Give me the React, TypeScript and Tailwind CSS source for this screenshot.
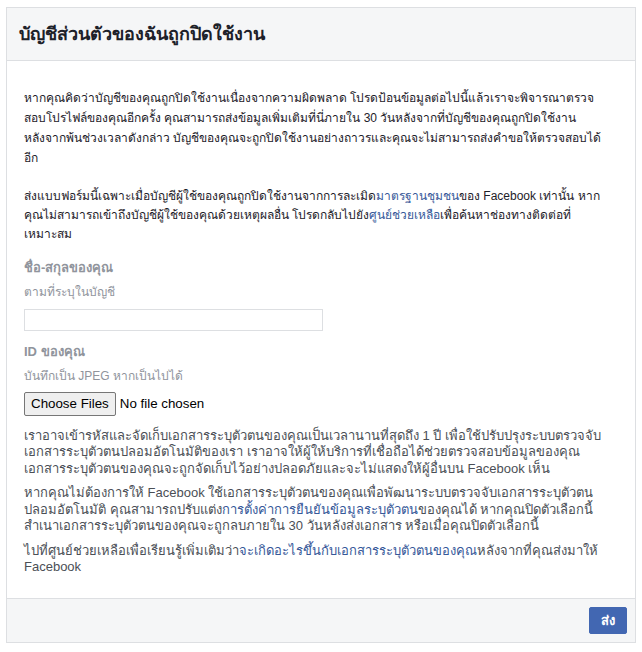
import React from 'react';

const link = 'text-[#365899]';

function Lines({ lines, className }: { lines: React.ReactNode[]; className: string }) {
  return (
    <p className={className}>
      {lines.map((l, i) => (
        <span key={i} className="block whitespace-nowrap">
          {l}
        </span>
      ))}
    </p>
  );
}

export default function App() {
  return (
    <div className="min-h-screen bg-white px-[6px] pt-[7px] font-['Liberation_Sans',Arial,sans-serif]">
      <div className="border border-[#dddfe2] bg-white">
        {/* Header */}
        <div className="flex h-[53px] items-center border-b border-[#dddfe2] bg-[#f5f6f7] px-[12px]">
          <h2 className="text-[18px] font-bold text-[#1d2129]">บัญชีส่วนตัวของฉันถูกปิดใช้งาน</h2>
        </div>

        {/* Body */}
        <div className="px-[17px] pt-[27px] pb-[22px]">
          <Lines
            className="text-[12px] leading-[20px] text-[#1d2129]"
            lines={[
              'หากคุณคิดว่าบัญชีของคุณถูกปิดใช้งานเนื่องจากความผิดพลาด โปรดป้อนข้อมูลต่อไปนี้แล้วเราจะพิจารณาตรวจ',
              'สอบโปรไฟล์ของคุณอีกครั้ง คุณสามารถส่งข้อมูลเพิ่มเติมที่นี่ภายใน 30 วันหลังจากที่บัญชีของคุณถูกปิดใช้งาน',
              'หลังจากพ้นช่วงเวลาดังกล่าว บัญชีของคุณจะถูกปิดใช้งานอย่างถาวรและคุณจะไม่สามารถส่งคำขอให้ตรวจสอบได้',
              'อีก',
            ]}
          />
          <Lines
            className="mt-[19px] text-[12px] leading-[19px] text-[#1d2129]"
            lines={[
              <>
                ส่งแบบฟอร์มนี้เฉพาะเมื่อบัญชีผู้ใช้ของคุณถูกปิดใช้งานจากการละเมิด<span className={link}>มาตรฐานชุมชน</span>ของ Facebook เท่านั้น หาก
              </>,
              <>
                คุณไม่สามารถเข้าถึงบัญชีผู้ใช้ของคุณด้วยเหตุผลอื่น โปรดกลับไปยัง<span className={link}>ศูนย์ช่วยเหลือ</span>เพื่อค้นหาช่องทางติดต่อที่
              </>,
              'เหมาะสม',
            ]}
          />

          <div className="mt-[14px] text-[13px] font-bold leading-[20px] text-[#90949c]">ชื่อ-สกุลของคุณ</div>
          <div className="mt-[4px] text-[12px] leading-[20px] text-[#90949c]">ตามที่ระบุในบัญชี</div>
          <input
            type="text"
            className="mt-[7px] block h-[22px] w-[299px] border border-[#dddfe2] bg-white px-[3px] text-[12px] outline-none"
          />

          <div className="mt-[11px] text-[13px] font-bold leading-[20px] text-[#90949c]">ID ของคุณ</div>
          <div className="mt-[4px] text-[12px] leading-[20px] text-[#90949c]">บันทึกเป็น JPEG หากเป็นไปได้</div>
          <input
            type="file"
            multiple
            className="mt-[6px] block text-[13.33px] text-black file:mr-[4px] file:rounded-[2px] file:border file:border-[#767676] file:bg-[#efefef] file:px-[6px] file:py-[1px] file:text-black"
          />

          <div className="mt-[12px] space-y-[8px] text-[13px] leading-[16.5px] text-[#4b4f56]">
            <Lines
              className=""
              lines={[
                'เราอาจเข้ารหัสและจัดเก็บเอกสารระบุตัวตนของคุณเป็นเวลานานที่สุดถึง 1 ปี เพื่อใช้ปรับปรุงระบบตรวจจับ',
                'เอกสารระบุตัวตนปลอมอัตโนมัติของเรา เราอาจให้ผู้ให้บริการที่เชื่อถือได้ช่วยตรวจสอบข้อมูลของคุณ',
                'เอกสารระบุตัวตนของคุณจะถูกจัดเก็บไว้อย่างปลอดภัยและจะไม่แสดงให้ผู้อื่นบน Facebook เห็น',
              ]}
            />
            <Lines
              className=""
              lines={[
                'หากคุณไม่ต้องการให้ Facebook ใช้เอกสารระบุตัวตนของคุณเพื่อพัฒนาระบบตรวจจับเอกสารระบุตัวตน',
                <>
                  ปลอมอัตโนมัติ คุณสามารถปรับแต่ง<span className={link}>การตั้งค่าการยืนยันข้อมูลระบุตัวตน</span>ของคุณได้ หากคุณปิดตัวเลือกนี้
                </>,
                'สำเนาเอกสารระบุตัวตนของคุณจะถูกลบภายใน 30 วันหลังส่งเอกสาร หรือเมื่อคุณปิดตัวเลือกนี้',
              ]}
            />
            <Lines
              className=""
              lines={[
                <>
                  ไปที่ศูนย์ช่วยเหลือเพื่อเรียนรู้เพิ่มเติมว่า<span className={link}>จะเกิดอะไรขึ้นกับเอกสารระบุตัวตนของคุณ</span>หลังจากที่คุณส่งมาให้
                </>,
                'Facebook',
              ]}
            />
          </div>
        </div>

        {/* Footer */}
        <div className="flex h-[44px] items-center justify-end border-t border-[#dddfe2] bg-[#f5f6f7] pr-[8px]">
          <button className="flex h-[27px] w-[38px] items-center justify-center rounded-[2px] border border-[#4267b2] bg-[#4267b2] text-[13px] font-bold text-white">
            ส่ง
          </button>
        </div>
      </div>
    </div>
  );
}
